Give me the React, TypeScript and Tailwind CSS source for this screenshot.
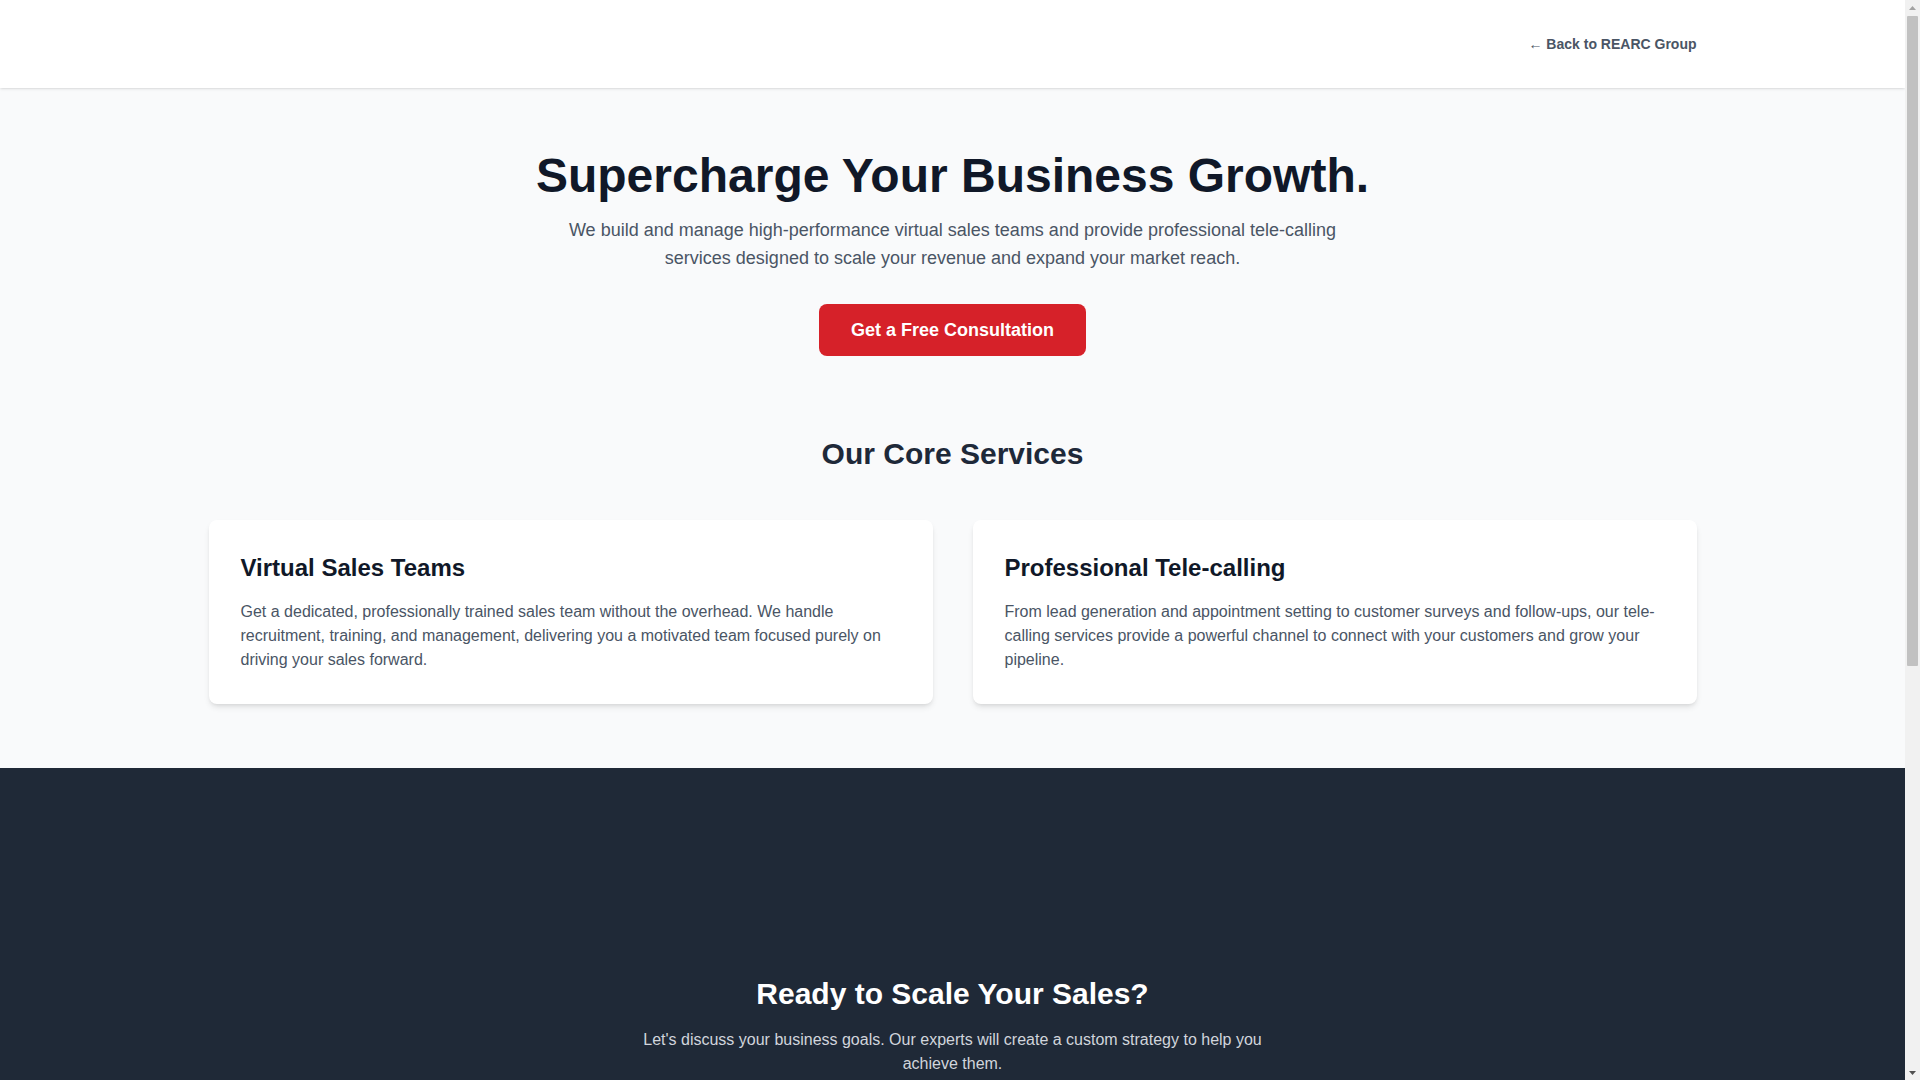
import React from "react";

function FakeScrollbar() {
  return (
    <div className="w-[15px] shrink-0 h-screen sticky top-0 bg-[#f1f1f1] flex flex-col items-center">
      <div className="h-[15px] w-full flex items-center justify-center">
        <svg width="7" height="4" viewBox="0 0 7 4"><path d="M0 4 L3.5 0 L7 4 Z" fill="#a3a3a3" /></svg>
      </div>
      <div className="flex-1 w-full px-[2px] py-[1px]">
        <div className="h-[62%] w-full bg-[#c1c1c1] rounded-[1px]" />
      </div>
      <div className="h-[15px] w-full flex items-center justify-center">
        <svg width="7" height="4" viewBox="0 0 7 4"><path d="M0 0 L3.5 4 L7 0 Z" fill="#505050" /></svg>
      </div>
    </div>
  );
}

export default function App() {
  return (
    <div className="flex bg-[#f9fafb]">
      <div className="flex-1 min-w-0 min-h-screen bg-[#f9fafb] font-['Liberation_Sans',Arial,sans-serif]">
        <header className="bg-white shadow-sm">
          <div className="container mx-auto px-6 h-[88px] flex items-center justify-end">
            <a href="#" className="text-sm font-bold text-gray-600">
              ← Back to REARC Group
            </a>
          </div>
        </header>

        <section className="pt-16 pb-4 text-center">
          <div className="container mx-auto px-6">
            <h1 className="text-5xl font-bold text-gray-900 mb-4">
              Supercharge Your Business Growth.
            </h1>
            <p className="text-lg text-gray-600 max-w-3xl mx-auto mb-8">
              We build and manage high-performance virtual sales teams and provide professional tele-calling services designed to scale your revenue and expand your market reach.
            </p>
            <a href="#" className="inline-block bg-[#d62129] text-white font-bold text-lg px-8 py-3 rounded-lg">
              Get a Free Consultation
            </a>
          </div>
        </section>

        <section className="pt-16 pb-16">
          <div className="container mx-auto px-6">
            <h2 className="text-3xl font-bold text-gray-800 text-center mb-12">Our Core Services</h2>
            <div className="grid grid-cols-2 gap-10">
              <div className="bg-white rounded-lg shadow-md p-8">
                <h3 className="text-2xl font-bold text-gray-900 mb-4">Virtual Sales Teams</h3>
                <p className="text-base text-gray-600">
                  Get a dedicated, professionally trained sales team without the overhead. We handle recruitment, training, and management, delivering you a motivated team focused purely on driving your sales forward.
                </p>
              </div>
              <div className="bg-white rounded-lg shadow-md p-8">
                <h3 className="text-2xl font-bold text-gray-900 mb-4">Professional Tele-calling</h3>
                <p className="text-base text-gray-600">
                  From lead generation and appointment setting to customer surveys and follow-ups, our tele-calling services provide a powerful channel to connect with your customers and grow your pipeline.
                </p>
              </div>
            </div>
          </div>
        </section>

        <section className="bg-[#1f2937] pt-[208px] pb-24 text-center">
          <div className="container mx-auto px-6">
            <h2 className="text-3xl font-bold text-white mb-4">Ready to Scale Your Sales?</h2>
            <p className="text-base text-gray-300 max-w-2xl mx-auto">
              Let's discuss your business goals. Our experts will create a custom strategy to help you achieve them.
            </p>
          </div>
        </section>
      </div>
      <FakeScrollbar />
    </div>
  );
}
